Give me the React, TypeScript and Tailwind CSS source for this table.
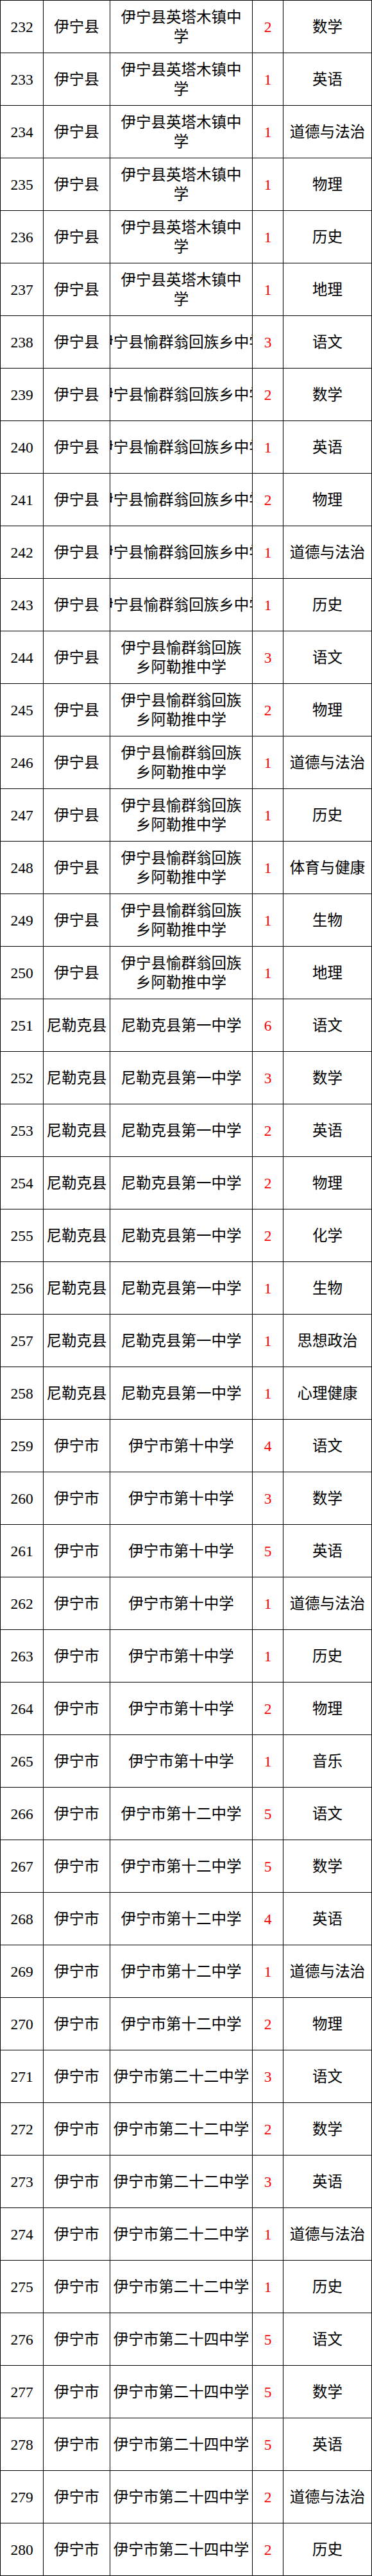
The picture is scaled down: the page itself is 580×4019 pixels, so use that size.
const YT = '伊宁县英塔木镇中\n学';
const YQ = '伊宁县愉群翁回族乡中学';
const AL = '伊宁县愉群翁回族\n乡阿勒推中学';
const NL = '尼勒克县第一中学';

type Row = [number, string, string, number, string];

const rows: Row[] = [
    [232, '伊宁县', YT, 2, '数学'],
    [233, '伊宁县', YT, 1, '英语'],
    [234, '伊宁县', YT, 1, '道德与法治'],
    [235, '伊宁县', YT, 1, '物理'],
    [236, '伊宁县', YT, 1, '历史'],
    [237, '伊宁县', YT, 1, '地理'],
    [238, '伊宁县', YQ, 3, '语文'],
    [239, '伊宁县', YQ, 2, '数学'],
    [240, '伊宁县', YQ, 1, '英语'],
    [241, '伊宁县', YQ, 2, '物理'],
    [242, '伊宁县', YQ, 1, '道德与法治'],
    [243, '伊宁县', YQ, 1, '历史'],
    [244, '伊宁县', AL, 3, '语文'],
    [245, '伊宁县', AL, 2, '物理'],
    [246, '伊宁县', AL, 1, '道德与法治'],
    [247, '伊宁县', AL, 1, '历史'],
    [248, '伊宁县', AL, 1, '体育与健康'],
    [249, '伊宁县', AL, 1, '生物'],
    [250, '伊宁县', AL, 1, '地理'],
    [251, '尼勒克县', NL, 6, '语文'],
    [252, '尼勒克县', NL, 3, '数学'],
    [253, '尼勒克县', NL, 2, '英语'],
    [254, '尼勒克县', NL, 2, '物理'],
    [255, '尼勒克县', NL, 2, '化学'],
    [256, '尼勒克县', NL, 1, '生物'],
    [257, '尼勒克县', NL, 1, '思想政治'],
    [258, '尼勒克县', NL, 1, '心理健康'],
    [259, '伊宁市', '伊宁市第十中学', 4, '语文'],
    [260, '伊宁市', '伊宁市第十中学', 3, '数学'],
    [261, '伊宁市', '伊宁市第十中学', 5, '英语'],
    [262, '伊宁市', '伊宁市第十中学', 1, '道德与法治'],
    [263, '伊宁市', '伊宁市第十中学', 1, '历史'],
    [264, '伊宁市', '伊宁市第十中学', 2, '物理'],
    [265, '伊宁市', '伊宁市第十中学', 1, '音乐'],
    [266, '伊宁市', '伊宁市第十二中学', 5, '语文'],
    [267, '伊宁市', '伊宁市第十二中学', 5, '数学'],
    [268, '伊宁市', '伊宁市第十二中学', 4, '英语'],
    [269, '伊宁市', '伊宁市第十二中学', 1, '道德与法治'],
    [270, '伊宁市', '伊宁市第十二中学', 2, '物理'],
    [271, '伊宁市', '伊宁市第二十二中学', 3, '语文'],
    [272, '伊宁市', '伊宁市第二十二中学', 2, '数学'],
    [273, '伊宁市', '伊宁市第二十二中学', 3, '英语'],
    [274, '伊宁市', '伊宁市第二十二中学', 1, '道德与法治'],
    [275, '伊宁市', '伊宁市第二十二中学', 1, '历史'],
    [276, '伊宁市', '伊宁市第二十四中学', 5, '语文'],
    [277, '伊宁市', '伊宁市第二十四中学', 5, '数学'],
    [278, '伊宁市', '伊宁市第二十四中学', 5, '英语'],
    [279, '伊宁市', '伊宁市第二十四中学', 2, '道德与法治'],
    [280, '伊宁市', '伊宁市第二十四中学', 2, '历史'],
];

const cell = 'flex items-center justify-center overflow-hidden border-r border-b border-black text-center';

export default function App() {
    return (
        <div
            className="w-[580px] bg-white text-black border-l border-t border-black text-[23.5px] leading-[30px]"
            style={{ fontFamily: '"Liberation Serif", "Noto Sans CJK SC", serif' }}
        >
            {rows.map(([no, county, school, count, subject]) => (
                <div key={no} className="grid grid-cols-[67px_104px_222px_48px_138px] h-[82px]">
                    <div className={cell}>{no}</div>
                    <div className={`${cell} whitespace-nowrap`}>{county}</div>
                    <div className={`${cell} whitespace-pre-line`}>
                        <span className="shrink-0 whitespace-pre">{school}</span>
                    </div>
                    <div className={`${cell} text-[#ff0000]`}>{count}</div>
                    <div className={`${cell} whitespace-nowrap`}>{subject}</div>
                </div>
            ))}
        </div>
    );
}
